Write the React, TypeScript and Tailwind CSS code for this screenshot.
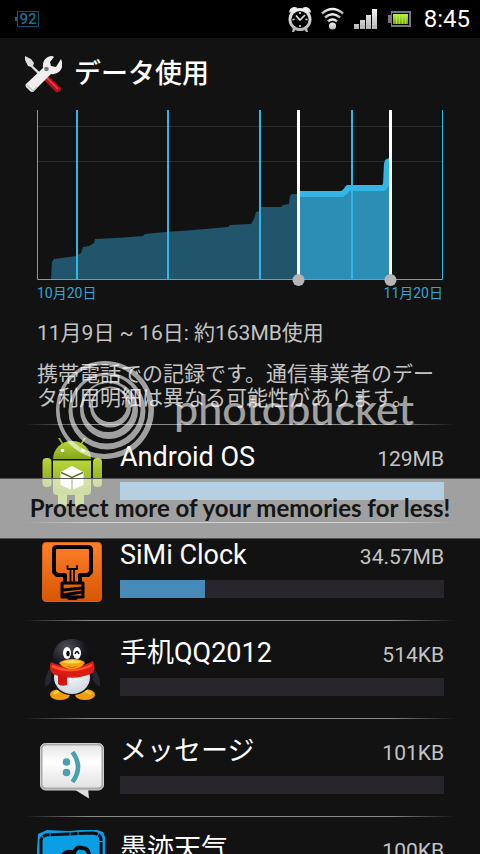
import type { ReactNode } from "react";

const usage = [
  { name: "Android OS", size: "129MB", percent: 100, icon: <AndroidIcon /> },
  { name: "SiMi Clock", size: "34.57MB", percent: 26.2, icon: <BulbIcon /> },
  { name: "手机QQ2012", size: "514KB", percent: 0, icon: <PenguinIcon /> },
  { name: "メッセージ", size: "101KB", percent: 0, icon: <MessageIcon /> },
  { name: "墨迹天气", size: "100KB", percent: 0, icon: <WeatherIcon /> },
];

function AndroidIcon() {
  return (
    <svg viewBox="0 0 72 72" className="size-[72px]" aria-hidden="true">
      <defs>
        <linearGradient id="droid" x1="0" y1="0" x2="0" y2="1">
          <stop offset="0" stopColor="#b7d63b" />
          <stop offset="1" stopColor="#83a61c" />
        </linearGradient>
      </defs>
      <path d="M23 0l5 8M49 0l-5 8" stroke="#9dbf2b" strokeWidth="1.6" strokeLinecap="round" />
      <path d="M17 21a19 18 0 0 1 38 0z" fill="url(#droid)" />
      <circle cx="26.5" cy="12.5" r="1.8" fill="#fff" />
      <circle cx="47" cy="12.5" r="1.8" fill="#fff" />
      <rect x="6.5" y="20" width="9" height="29" rx="4" fill="url(#droid)" />
      <rect x="57" y="20" width="9" height="29" rx="4" fill="url(#droid)" />
      <path d="M17 22.5h38V53q0 4-4 4H21q-4 0-4-4z" fill="url(#droid)" />
      <path d="M22 56h9v10q0 3-4.5 3T22 66zM39 56h9v10q0 3-4.5 3T39 66z" fill="#8fb32b" />
      <path d="M36 28l11.5 6v13L36 52l-11.5-5V34z" fill="#fff" />
      <path d="M25 34.5L36 39.5l11-5M36 39.5V52" fill="none" stroke="#5d7428" strokeWidth="1.5" />
    </svg>
  );
}

function BulbIcon() {
  return (
    <svg viewBox="0 0 72 72" className="size-[72px]" aria-hidden="true">
      <defs>
        <linearGradient id="orange" x1="0" y1="0" x2="0" y2="1">
          <stop offset="0" stopColor="#ff7f2c" />
          <stop offset="1" stopColor="#d85600" />
        </linearGradient>
      </defs>
      <rect x="6.5" y="6.5" width="59" height="59" rx="3.5" fill="url(#orange)" stroke="#d96017" />
      <g fill="none" stroke="#000" strokeLinecap="round" strokeLinejoin="round">
        <path d="M29 45v-6h-8l-3-3V14q0-3 3-3h31q3 0 3 3v22l-3 3h-8v6" strokeWidth="4" />
        <path d="M34.5 45V33m3.5 12V33M31.5 30v3H41v-3" strokeWidth="1.8" />
        <path d="M26 47h21v14H26zM27 54l19-2M27 59l19-3" strokeWidth="3" />
        <path d="M33 62.5h7" strokeWidth="3" />
      </g>
    </svg>
  );
}

function PenguinIcon() {
  return (
    <svg viewBox="0 0 72 72" className="size-[72px]" aria-hidden="true">
      <defs>
        <radialGradient id="head" cx=".35" cy=".25" r=".8">
          <stop offset="0" stopColor="#50505a" />
          <stop offset=".6" stopColor="#17171f" />
          <stop offset="1" stopColor="#07070c" />
        </radialGradient>
        <radialGradient id="belly" cx=".5" cy=".3" r=".7">
          <stop offset="0" stopColor="#fff" />
          <stop offset="1" stopColor="#ccd5df" />
        </radialGradient>
      </defs>
      <path d="M16 31Q8 42 9 52q4 0 9-9zM56 31q9 11 8 21-4 0-9-9z" fill="#272632" />
      <ellipse cx="24" cy="60.5" rx="10" ry="5.5" fill="#f29b0b" />
      <ellipse cx="49" cy="60.5" rx="10" ry="5.5" fill="#f29b0b" />
      <path d="M18 60q4-5 11-2M44 58q6-3 11 2" stroke="#ffcf43" strokeWidth="2.5" fill="none" />
      <ellipse cx="36" cy="43" rx="21" ry="18" fill="#14141b" />
      <ellipse cx="36" cy="43.5" rx="18" ry="16.5" fill="url(#belly)" />
      <path d="M17 30C15 14 23 5 36 5s22 9 19 25q-9 9-20 9T17 30z" fill="url(#head)" />
      <ellipse cx="31" cy="19" rx="4" ry="6" fill="#fff" />
      <ellipse cx="41" cy="19" rx="4" ry="6" fill="#fff" />
      <ellipse cx="32" cy="19.5" rx="1.7" ry="2.8" fill="#000" />
      <path d="M39 20q2-5 4 0" stroke="#000" strokeWidth="1.5" fill="none" />
      <path d="M15 28q21 10 42-1 3 6 0 12-20 9-40 1-5-6-2-12z" fill="#da1d12" />
      <path d="M16 32q20 9 40-1" stroke="#ff5132" strokeWidth="2.5" fill="none" />
      <path d="M22 40l9 2v9q-6 2-9-1z" fill="#cf1710" />
      <path d="M23 29q5-4 14-4t12 4q-5 6-13 6t-13-6z" fill="#f7a30a" />
      <path d="M26 28q11-4 20 0-10 3-20 0z" fill="#ffdc5a" />
      <path d="M30 32q7 2 12 0-6 3-12 0z" fill="#b52712" />
    </svg>
  );
}

function MessageIcon() {
  return (
    <svg viewBox="0 0 72 72" className="size-[72px]" aria-hidden="true">
      <defs>
        <linearGradient id="bubble" x1="0" y1="0" x2="0" y2="1">
          <stop offset="0" stopColor="#e6e6e6" />
          <stop offset=".4" stopColor="#fff" />
          <stop offset="1" stopColor="#e2e2e2" />
        </linearGradient>
      </defs>
      <path d="M36 56l17 10.5L52 56z" fill="#e0e0e0" />
      <rect x="4.5" y="11.5" width="63" height="46.5" rx="5" fill="#a9a9a9" stroke="#cfcfcf" />
      <rect x="6.5" y="13.5" width="59" height="42" rx="3.5" fill="url(#bubble)" />
      <circle cx="30.5" cy="30" r="3.8" fill="#4aa0b3" />
      <circle cx="30.5" cy="40.5" r="3.8" fill="#4aa0b3" />
      <path d="M36.5 20q11 15 0 30" fill="none" stroke="#4aa0b3" strokeWidth="4.6" />
    </svg>
  );
}

function WeatherIcon() {
  return (
    <svg viewBox="0 0 72 72" className="size-[72px]" aria-hidden="true">
      <path d="M2 4l9-4 22 1 25-2 9 3 2 5v60H1V20z" fill="#0a9ee5" />
      <path d="M5 26V10q1-4 5-5l22-1 25-1q8 1 8 7v18" fill="none" stroke="#0b0f12" strokeWidth="3" strokeDasharray="19 1 7 1" />
      <path d="M27 25q4-5 11-2 2-7 8-5 6 0 7 6" fill="none" stroke="#05090c" strokeWidth="4" />
      <path d="M42 21l7 2" stroke="#0a9ee5" strokeWidth="2" />
    </svg>
  );
}

function StatusIcons() {
  return (
    <svg viewBox="0 0 126 26" className="h-[26px] w-[126px]" aria-hidden="true">
      <defs>
        <linearGradient id="silver" x1="0" y1="0" x2="0" y2="1">
          <stop offset="0" stopColor="#f4f4f4" />
          <stop offset="1" stopColor="#b4b4b4" />
        </linearGradient>
        <linearGradient id="charge" x1="0" y1="0" x2="0" y2="1">
          <stop offset="0" stopColor="#b9f03c" />
          <stop offset="1" stopColor="#6cae08" />
        </linearGradient>
      </defs>
      <g fill="url(#silver)">
        <path d="M1.5 7q-1-3 2-5t6 0l-1 1zM22.5 7q1-3-2-5t-6 0l1 1zM5 22l3 1-2 3H4zM19 22l-3 1 2 3h2z" />
        <circle cx="12" cy="13.5" r="11.5" />
      </g>
      <circle cx="12" cy="13.5" r="8.6" fill="#000" />
      <path d="M12 6v2M12 19v2M4.5 13.5h2M17.5 13.5h2M8 9.5l4 4.5 5-5" stroke="#ddd" strokeWidth="1.6" fill="none" />
      <g fill="none" stroke="url(#silver)" strokeWidth="2.4">
        <path d="M34 7.5q10.5-9 21 0" />
        <path d="M37 11.5q7.5-6.5 15 0" />
        <path d="M40 15.5q4.5-4 9 0" />
      </g>
      <circle cx="44.5" cy="20" r="3.6" fill="url(#silver)" />
      <path d="M66 18h5v5h-5zM72 14h5v9h-5zM78 9h5v14h-5zM84 3h5v20h-5z" fill="url(#silver)" />
      <path d="M100 9h3V5h20v16h-20v-4h-3z" fill="#777" />
      <path d="M104 7h17v12h-17z" fill="#000" />
      <path d="M105 8h15v10h-15z" fill="url(#charge)" />
      <path d="M108.5 8v10M111.5 8v10M114.5 8v10M117.5 8v10" stroke="#cbf466" strokeWidth=".6" />
    </svg>
  );
}

function ToolsIcon() {
  return (
    <svg viewBox="0 0 38 38" className="size-[38px]" aria-hidden="true">
      <path d="M1 1l6 3 3 4-1 3 11 10-2 2L7 12l-3-1-3-6z" fill="#ddd" />
      <path d="M19 24l4-4 13 12q2 2 0 4t-4 1z" fill="#b80f1b" />
      <path d="M23 23l11 11" stroke="#ee4350" strokeWidth="1.5" />
      <path d="M19 13q-1-8 5-11 4-2 6 0l-4 5 1 4 5 1 5-8q3 7-1 12-4 4-9 3L10 36q-2 2-4 0l-4-4q-1-2 0-3z" fill="#efefef" />
      <circle cx="22.5" cy="14" r="2.3" fill="#777" />
      <path d="M3 30l6 6 4-4" fill="none" stroke="#c4c4c4" strokeWidth="1.5" />
    </svg>
  );
}

function UsageChart() {
  return (
    <svg viewBox="0 0 406 176" className="block h-auto w-full" role="img" aria-label="データ使用">
      <path d="M1 16.5h404M1 51.5h404" stroke="#2c2c2c" />
      <path
        d="M14 169l1-17 2-3 22-3 5-3 2-6 6-1 5-3 1-4 21-1 27-2 2-2 20-2 29-2 34-3 2-2 21-1 3-5 2-7 4-1 1-4h20l2-2 6-1 1-8 2-2h8v86z"
        fill="#20556b"
      />
      <path d="M263 169V84h43l3-3 2-3h36l2-5 1-22 2-1v119z" fill="#2c8db5" />
      <path
        d="M262 84h43l3-2 3-4h36l2-4 1-20"
        fill="none"
        stroke="#33b5e5"
        strokeWidth="6"
        strokeLinejoin="round"
      />
      <path d="M347 54l1-4 4-2v10z" fill="#33b5e5" />
      <path d="M40 0v169M131 0v169M223 0v169M315 0v169" stroke="#33b5e5" strokeWidth="2" />
      <path d="M.5 0v169.5h405V0" fill="none" stroke="#33b5e5" />
      <path d="M261.5 0v169M353.5 0v169" stroke="#fff" strokeWidth="3" />
      <circle cx="261.5" cy="170" r="6" fill="#b5b5b5" />
      <circle cx="353.5" cy="170" r="6" fill="#b5b5b5" />
    </svg>
  );
}

// x, y, r of nested discs, filled and empty by turns
const discs = [
  [49, 49, 49],
  [48, 48.5, 44.5],
  [51, 50, 38.5],
  [50.5, 48.5, 34],
  [53, 49, 29],
  [52, 46.5, 24.5],
  [54.5, 46, 20.5],
  [54, 44, 17],
];

function Rings() {
  const d = discs.map(([x, y, r]) => `M${x - r} ${y}a${r} ${r} 0 1 0 ${2 * r} 0a${r} ${r} 0 1 0 ${-2 * r} 0z`).join("");

  return (
    <svg viewBox="0 0 98 98" className="size-[98px]" aria-hidden="true">
      <path d={d} fill="#fff" fillRule="evenodd" />
    </svg>
  );
}

function UsageRow({ name, size, percent, icon }: { name: string; size: string; percent: number; icon: ReactNode }) {
  return (
    <li>
      <div className="mx-6 h-px bg-[linear-gradient(to_right,transparent,#8a8a8a_15%,#8a8a8a_85%,transparent)]" />
      <div className="flex gap-3 px-9 pt-[13px] pb-3">
        {icon}
        <div className="min-w-0 flex-1">
          <div className="flex items-baseline justify-between">
            <h2 className="text-[27px] leading-[38px] text-white">{name}</h2>
            <span className="text-[21px] leading-[38px] text-[#c4c4c4]">{size}</span>
          </div>
          <div className="mt-1 h-[18px] bg-[#28252b]">
            <div className="h-full bg-[#468bb7]" style={{ width: `${percent}%` }} />
          </div>
        </div>
      </div>
    </li>
  );
}

export default function App() {
  return (
    <div className="relative flex h-screen flex-col overflow-hidden bg-[#121212] font-[Roboto,'Noto_Sans_CJK_JP',sans-serif]">
      <header className="flex h-[38px] shrink-0 items-center justify-between bg-black pr-[10px] pl-[15px]">
        <div className="flex items-center">
          <span className="h-1 w-[2px] bg-[#14698a]" />
          <span className="h-4 w-[22px] border border-[#10536d] text-center text-[15px] leading-[14px] font-medium text-[#1d6f91]">
            92
          </span>
        </div>
        <div className="flex items-center gap-[10px]">
          <StatusIcons />
          <time className="text-[24px] leading-8 text-white">8:45</time>
        </div>
      </header>

      <main>
        <div className="flex h-[72px] items-center gap-3 px-6">
          <ToolsIcon />
          <h1 className="text-[27px] leading-9 font-medium text-white">データ使用</h1>
        </div>
        <div className="px-[37px]">
          <UsageChart />
          <div className="flex justify-between text-[14px] leading-[14px] text-[#33a5d3]">
            <span>10月20日</span>
            <span>11月20日</span>
          </div>
          <p className="mt-[21px] text-[21px] leading-6 text-[#c4c4c4]">11月9日 ~ 16日: 約163MB使用</p>
          <p className="mt-[17px] mb-[14px] text-[21px] leading-6 text-[#c4c4c4]">
            携帯電話での記録です。通信事業者のデータ利用明細は異なる可能性があります。
          </p>
        </div>
        <ul>
          {usage.map((app) => (
            <UsageRow key={app.name} {...app} />
          ))}
        </ul>
      </main>

      <div className="absolute inset-x-0 top-[361px] font-[Lato,sans-serif]">
        <div className="flex h-[117px] items-start gap-5 pl-14 opacity-60">
          <Rings />
          <span className="pt-6 text-[43px] leading-[48px] font-medium text-white">photobucket</span>
        </div>
        <p className="h-[61px] border-y border-[#555] bg-white/60 text-center text-[24px] leading-[58px] font-bold whitespace-nowrap text-[#151515]">
          Protect more of your memories for less!
        </p>
      </div>
    </div>
  );
}
